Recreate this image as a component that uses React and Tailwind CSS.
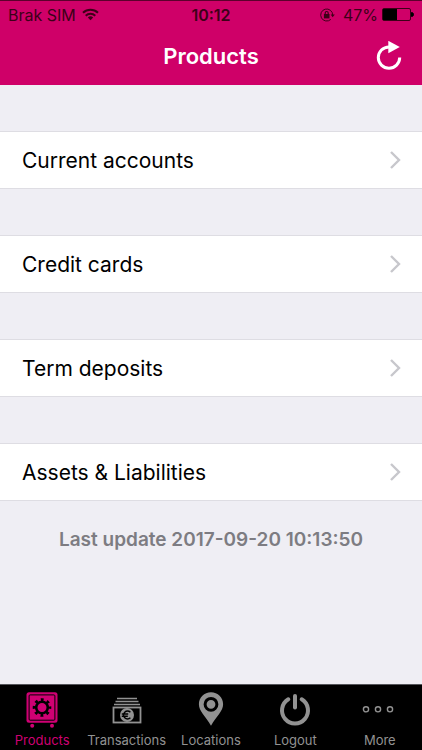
import {useState} from "react";

const products = [
    { id: 1, name: "Current accounts" },
    { id: 2, name: "Credit cards" },
    { id: 3, name: "Term deposits" },
    { id: 4, name: "Assets & Liabilities" },
]

const tabs = [
    { name: "Products", Icon: SafeIcon },
    { name: "Transactions", Icon: MoneyIcon },
    { name: "Locations", Icon: PinIcon },
    { name: "Logout", Icon: PowerIcon },
    { name: "More", Icon: MoreIcon },
]

function SafeIcon() {
    return (
        <svg width="36" height="36" viewBox="0 0 36 36" fill="none" stroke="currentColor" aria-hidden="true">
            <rect x="2.5" y="0.3" width="31" height="30.5" rx="2.5" fill="currentColor" stroke="none" />
            <rect x="5.1" y="2.9" width="25.8" height="25.3" rx="1" stroke="#000" strokeWidth="1" />
            <g stroke="#000">
                <circle cx="18" cy="15.5" r="5.8" strokeWidth="2.6" />
                <circle cx="18" cy="15.5" r="7.8" strokeWidth="3" strokeDasharray="2.8 3.326" strokeDashoffset="1.4" />
            </g>
            <circle cx="8.2" cy="33.8" r="2" fill="currentColor" stroke="none" />
            <circle cx="28" cy="33.8" r="2" fill="currentColor" stroke="none" />
        </svg>
    )
}

function MoneyIcon() {
    return (
        <svg width="36" height="36" viewBox="0 0 36 36" fill="none" stroke="currentColor" aria-hidden="true">
            <path d="M8 6.5h20M6.5 9.5h23M5 12.500h26" strokeWidth="1.6" />
            <rect x="4.5" y="15.5" width="27" height="15" strokeWidth="1.8" />
            <circle cx="18" cy="23" r="7" fill="currentColor" stroke="none" />
            <path d="M21.4 20.2a4 4 0 1 0 0 5.6M12.8 22h6.4M12.8 24.200h6" stroke="#000" strokeWidth="1.4" />
        </svg>
    )
}

function PinIcon() {
    return (
        <svg width="36" height="36" viewBox="0 0 36 36" aria-hidden="true">
            <path d="M18 0.3C11.2 0.3 5.900 5.5 5.900 12.2c0 7 6.6 11.5 12.1 21.5 5.5-10 12.1-14.5 12.1-21.5C30.1 5.5 24.8 0.3 18 0.3z" fill="currentColor" />
            <circle cx="18" cy="12.3" r="5.900" fill="currentColor" stroke="#000" strokeWidth="3" />
        </svg>
    )
}

function PowerIcon() {
    return (
        <svg width="36" height="36" viewBox="0 0 36 36" fill="none" stroke="currentColor" strokeWidth="4" strokeLinecap="round" aria-hidden="true">
            <path d="M18 4v11.5" />
            <path d="M11.3 7.3a13 13 0 1 0 13.4 0" />
        </svg>
    )
}

function MoreIcon() {
    return (
        <svg width="36" height="36" viewBox="0 0 36 36" fill="none" stroke="currentColor" strokeWidth="1.4" aria-hidden="true">
            <circle cx="4" cy="17.3" r="2.6" />
            <circle cx="16" cy="17.3" r="2.6" />
            <circle cx="28" cy="17.3" r="2.6" />
        </svg>
    )
}

function StatusBar() {
    return (
        <div className="grid h-7 grid-cols-3 items-center px-2 text-base text-[#3d0018]">
            <div className="flex items-center gap-1.5 whitespace-nowrap">
                <span>Brak SIM</span>
                <svg width="17" height="15" viewBox="0 0 17 15" fill="none" stroke="currentColor" strokeWidth="2" aria-hidden="true">
                    <path d="M1 4.8a10.8 10.8 0 0 1 15 0M3.7 7.7a6.9 6.9 0 0 1 9.6 0" />
                    <path d="M8.5 12.3 5.8 9.5a3.9 3.9 0 0 1 5.4 0z" fill="currentColor" stroke="none" />
                </svg>
            </div>
            <div className="text-center font-semibold">10:12</div>
            <div className="flex items-center justify-end whitespace-nowrap">
                <svg className="mr-2" width="15" height="15" viewBox="0 0 15 15" fill="none" stroke="currentColor" strokeWidth="1" aria-hidden="true">
                    <path d="M10.8 11.400A6 6 0 1 1 12.7 7" />
                    <path d="M10.6 6.5h4.2l-2.1 2.7z" fill="currentColor" stroke="none" />
                    <rect x="3.900" y="6" width="5.6" height="4.4" fill="currentColor" stroke="none" />
                    <path d="M5.2 6.5V5a1.5 1.5 0 0 1 3 0v1.5" strokeWidth="1.2" />
                </svg>
                <span className="mr-1">47%</span>
                <svg width="32" height="15" viewBox="0 0 32 15" aria-hidden="true">
                    <rect x="0.5" y="0.5" width="28" height="12" rx="1.5" fill="none" stroke="currentColor" />
                    <rect x="1" y="1" width="14" height="11" fill="#000" />
                    <path d="M29.5 4.5a2 2 0 0 1 0 4z" fill="#000" stroke="#000" />
                </svg>
            </div>
        </div>
    )
}

export default function App() {
    const [active, setActive] = useState("Products")

    return (
        <div className="flex min-h-screen flex-col bg-[#efeef4] font-[Inter,sans-serif] text-black">
            <header className="border-t border-[#5c002c] bg-[#cf0068] pb-0.5">
                <StatusBar />
                <div className="grid h-[54px] grid-cols-[1fr_auto_1fr] items-center px-5">
                    <h1 className="col-start-2 text-[22px] font-semibold text-white">Products</h1>
                    <button type="button" aria-label="Refresh" className="justify-self-end text-white">
                        <svg width="26" height="30" viewBox="0 0 26 30" fill="none" stroke="currentColor" strokeWidth="3" aria-hidden="true">
                            <path d="M14 5.9h-1a10.7 10.7 0 1 0 10.7 10.700" />
                            <path d="M12.300 -0.2v12.4L23.8 6z" fill="currentColor" stroke="none" />
                        </svg>
                    </button>
                </div>
            </header>

            <main className="flex-1">
                <ul>
                    {products.map((product)=>
                        <li key={product.id} className="pt-[46px]">
                            <a href="#" className="flex h-[58px] items-center justify-between border-y border-[#dedde3] bg-white pl-[22px] pr-5">
                                <span className="pt-0.5 text-[21px]">{product.name}</span>
                                <svg width="13" height="18" viewBox="0 0 13 18" fill="none" stroke="#c7c7cc" strokeWidth="2.4" aria-hidden="true">
                                    <path d="M2 1l8 8-8 8" />
                                </svg>
                            </a>
                        </li>
                    )}
                </ul>
                <p className="pt-[25px] text-center text-[19px] font-semibold text-[#7d7c82]">Last update 2017-09-20 10:13:50</p>
            </main>

            <nav className="grid grid-cols-5 border-t border-[#55555a] bg-black pt-[7px] pb-px">
                {tabs.map(({ name, Icon })=>
                    <button
                        key={name}
                        type="button"
                        onClick={() => setActive(name)}
                        className={`flex flex-col items-center gap-[3px] text-[13px] leading-[18px] ${active === name ? "text-[#cf0073]" : "text-[#929292]"}`}
                    >
                        <Icon />
                        <span>{name}</span>
                    </button>
                )}
            </nav>
        </div>
    )
}
